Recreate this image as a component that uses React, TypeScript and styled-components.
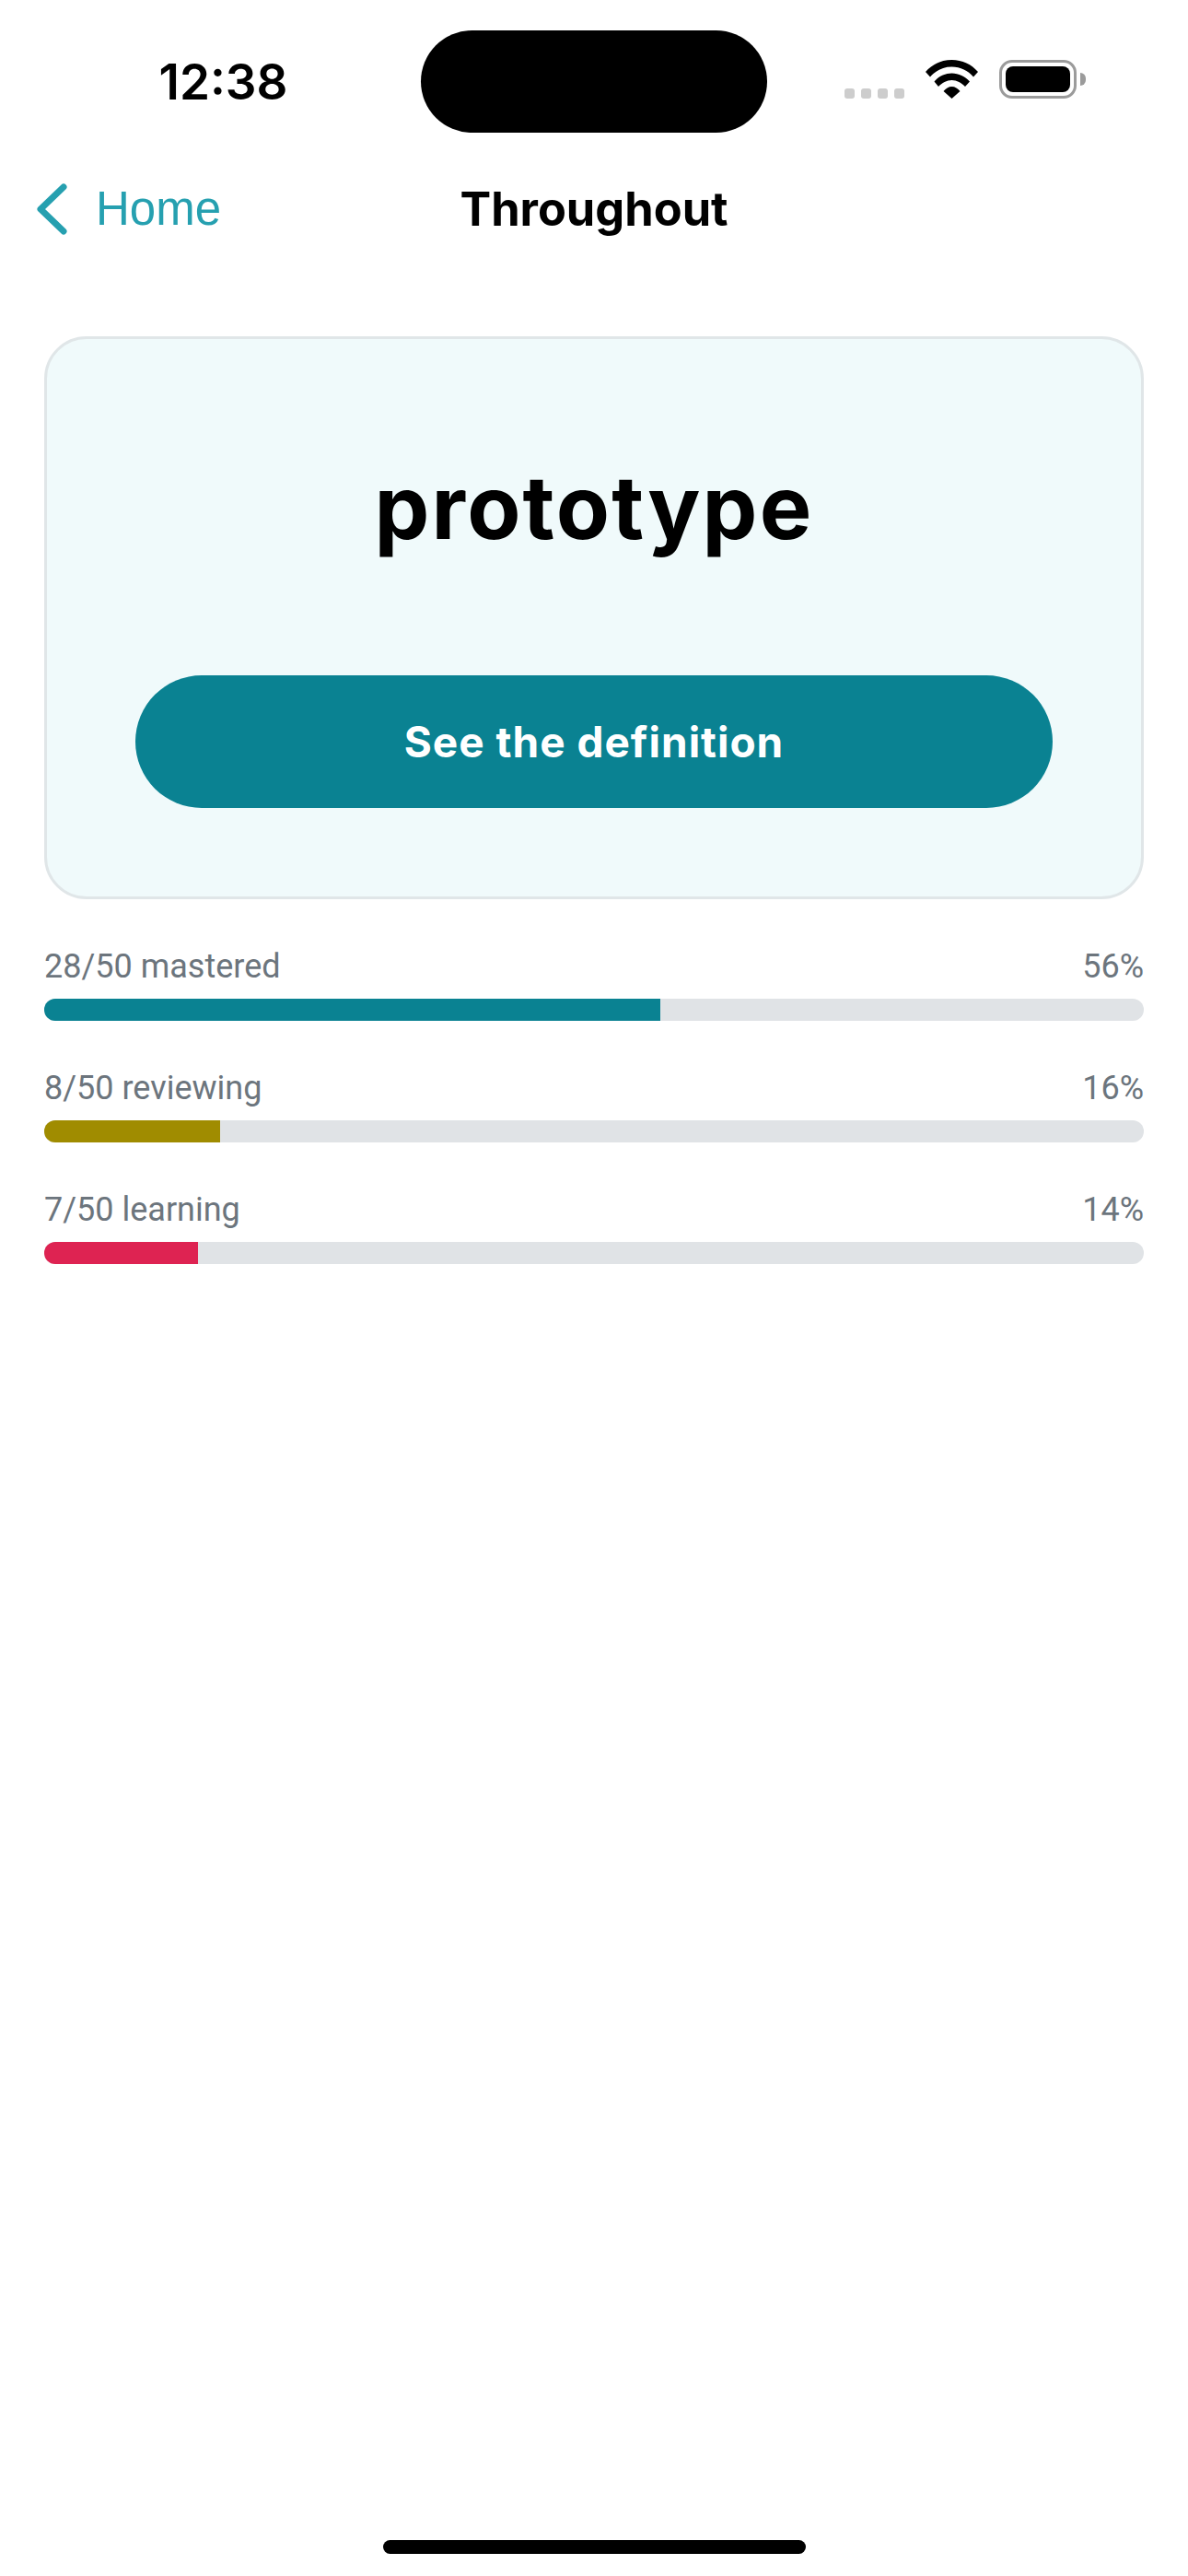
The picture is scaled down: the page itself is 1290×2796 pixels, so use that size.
import React from 'react';
import styled, { createGlobalStyle } from 'styled-components';

const GlobalStyle = createGlobalStyle`
  html, body {
    margin: 0;
    padding: 0;
    background: #fff;
    font-family: Inter, "Liberation Sans", sans-serif;
  }
`;

const Page = styled.div`
  width: 1290px;
  height: 2796px;
  display: flex;
  flex-direction: column;
  overflow: hidden;
  background: #fff;
`;

const StatusBar = styled.div`
  display: flex;
  align-items: center;
  height: 111px;
  margin-top: 33px;
`;

const TimeSlot = styled.div`
  width: 457px;
  padding-left: 28px;
  box-sizing: border-box;
  text-align: center;
  font-size: 53px;
  font-weight: 600;
  line-height: 64px;
  color: #000;
`;

const Island = styled.div`
  width: 376px;
  height: 111px;
  background: #000;
  border-radius: 56px;
`;

const StatusIcons = styled.div`
  display: flex;
  align-items: flex-end;
  height: 42px;
  margin: 0 0 5px 84px;
`;

const Signal = styled.div`
  display: flex;
  gap: 7px;
  margin-right: 23px;
`;

const SignalDot = styled.span`
  width: 11px;
  height: 11px;
  border-radius: 3px;
  background: #cdcdcd;
`;

const Battery = styled.div`
  display: flex;
  align-items: center;
  margin-left: 23px;
`;

const BatteryShell = styled.div`
  box-sizing: border-box;
  width: 84px;
  height: 42px;
  padding: 4px;
  border: 3px solid #9b9b9b;
  border-radius: 14px;
`;

const BatteryFill = styled.div`
  height: 100%;
  background: #000;
  border-radius: 8px;
`;

const BatteryCap = styled.div`
  width: 6px;
  height: 14px;
  margin-left: 4px;
  background: #9b9b9b;
  border-radius: 0 6px 6px 0;
`;

const Nav = styled.div`
  display: grid;
  grid-template-columns: 1fr auto 1fr;
  align-items: center;
  height: 100px;
  margin-top: 33px;
`;

const BackLink = styled.div`
  display: flex;
  align-items: center;
  gap: 31px;
  padding-left: 40px;
  color: #26a0b0;
  font-family: "Liberation Sans", Arial, sans-serif;
  font-size: 51px;
  line-height: 60px;
`;

const Title = styled.div`
  font-size: 50.5px;
  font-weight: 700;
  line-height: 60px;
  color: #000;
`;

const Content = styled.div`
  display: flex;
  flex-direction: column;
  padding: 88px 48px 0;
`;

const Card = styled.div`
  box-sizing: border-box;
  height: 611px;
  display: flex;
  flex-direction: column;
  align-items: center;
  padding: 0 96px 96px;
  background: #f0fafb;
  border: 3px solid #e0e6e8;
  border-radius: 46px;
`;

const Word = styled.div`
  flex: 1;
  display: flex;
  align-items: center;
  font-size: 95px;
  font-weight: 700;
  letter-spacing: 2.2px;
  color: #000;
`;

const RevealButton = styled.button`
  width: 100%;
  height: 144px;
  border: 0;
  padding: 0;
  background: #0a8292;
  border-radius: 72px;
  color: #fff;
  font-family: Inter, "Liberation Sans", sans-serif;
  font-size: 46px;
  font-weight: 700;
  letter-spacing: 1px;
`;

const Stats = styled.div`
  display: flex;
  flex-direction: column;
  gap: 53px;
  margin-top: 53px;
`;

const Stat = styled.div`
  display: flex;
  flex-direction: column;
  gap: 15px;
`;

const StatLabels = styled.div`
  display: flex;
  justify-content: space-between;
  font-family: Roboto, sans-serif;
  font-size: 36px;
  line-height: 40px;
  color: #6c757d;
`;

const Track = styled.div`
  height: 24px;
  background: #e0e3e6;
  border-radius: 12px;
  overflow: hidden;
`;

const Fill = styled.div<{ $color: string }>`
  height: 100%;
  background: ${p => p.$color};
`;

const HomeIndicator = styled.div`
  width: 459px;
  height: 15px;
  margin: auto auto 24px;
  background: #000;
  border-radius: 8px;
`;

const stats = [
  { label: '28/50 mastered', percent: 56, color: '#0a8292' },
  { label: '8/50 reviewing', percent: 16, color: '#a08c00' },
  { label: '7/50 learning', percent: 14, color: '#de2352' },
];

const Wifi = () => (
  <svg width="57" height="42" viewBox="0 0 57 42" fill="#000">
    <path d="M0 13C7 5 17 0 28.5 0C40 0 50 5 57 13L52 18.5C46 11.5 38 7.5 28.5 7.5C19 7.5 11 11.5 5 18.5Z" />
    <path d="M9.5 23.5C14 18 21 14.5 28.5 14.5C36 14.5 43 18 48 23.5L43 29C39 25 34 22 28.5 22C23 22 18 25 14 29Z" />
    <path d="M19.5 34C22 31 25 29 28.5 29C32 29 35 31 37.5 34L28.5 42Z" />
  </svg>
);

const Chevron = () => (
  <svg width="33" height="56" viewBox="0 0 33 56" fill="none">
    <path d="M29 4L4 28L29 52" stroke="#26a0b0" strokeWidth="7" strokeLinecap="round" strokeLinejoin="round" />
  </svg>
);

const App: React.FC = () => {
  return (
    <Page>
      <GlobalStyle />
      <StatusBar>
        <TimeSlot>12:38</TimeSlot>
        <Island />
        <StatusIcons>
          <Signal>
            <SignalDot />
            <SignalDot />
            <SignalDot />
            <SignalDot />
          </Signal>
          <Wifi />
          <Battery>
            <BatteryShell>
              <BatteryFill />
            </BatteryShell>
            <BatteryCap />
          </Battery>
        </StatusIcons>
      </StatusBar>
      <Nav>
        <BackLink>
          <Chevron />
          Home
        </BackLink>
        <Title>Throughout</Title>
      </Nav>
      <Content>
        <Card>
          <Word>prototype</Word>
          <RevealButton>See the definition</RevealButton>
        </Card>
        <Stats>
          {stats.map(s => (
            <Stat key={s.label}>
              <StatLabels>
                <span>{s.label}</span>
                <span>{s.percent}%</span>
              </StatLabels>
              <Track>
                <Fill $color={s.color} style={{ width: `${s.percent}%` }} />
              </Track>
            </Stat>
          ))}
        </Stats>
      </Content>
      <HomeIndicator />
    </Page>
  );
};

export default App;
